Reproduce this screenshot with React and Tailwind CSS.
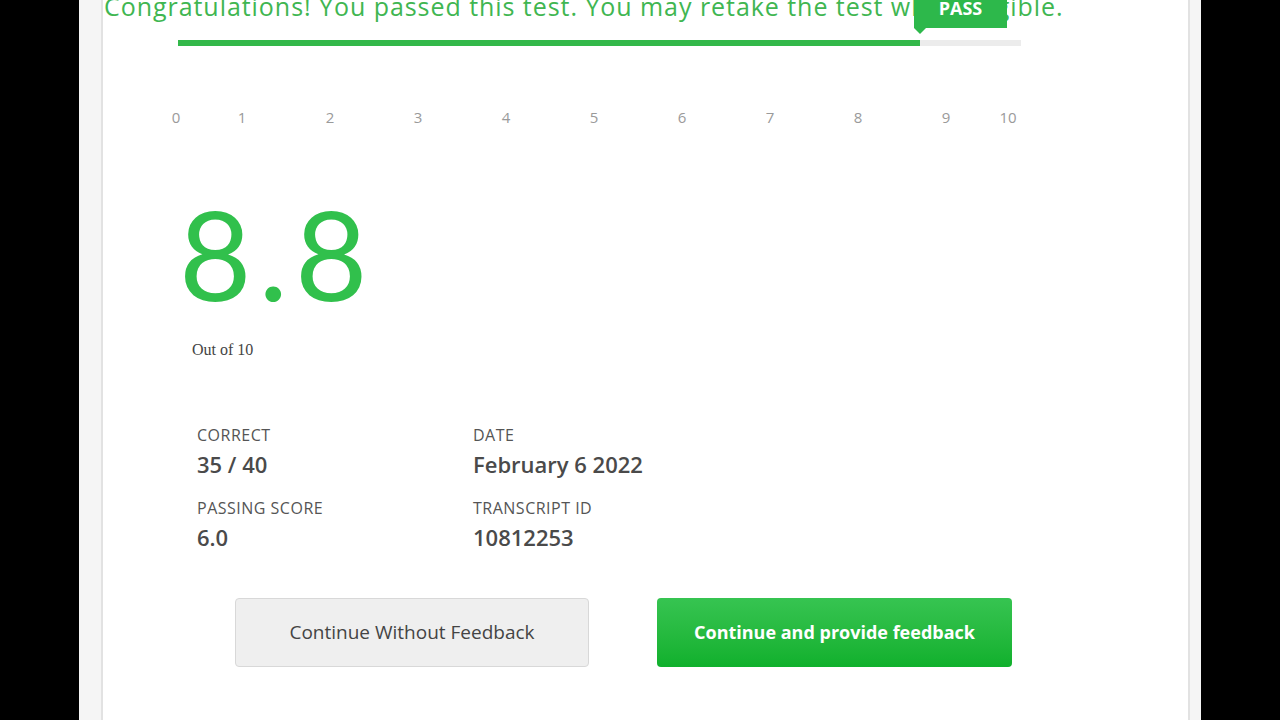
export default function App() {
  const ticks = [1, 2, 3, 4, 5, 6, 7, 8, 9];
  const stats = [
    ["CORRECT", "35 / 40"],
    ["DATE", "February 6 2022"],
    ["PASSING SCORE", "6.0"],
    ["TRANSCRIPT ID", "10812253"],
  ];
  return (
    <div className="w-full h-[720px] bg-black flex overflow-hidden" style={{ fontFamily: '"Open Sans", "Liberation Sans", sans-serif' }}>
      <div className="ml-[79px] w-[1122px] h-full bg-[#f5f5f5] flex pl-[22px] pr-[11px]">
        <div className="flex-1 h-full bg-white border-l-2 border-r-2 border-[#e2e2e2] relative">
          <div className="mt-[-9px] pl-[1px] text-[25px] leading-[30px] text-[#40b651] whitespace-nowrap tracking-[0.95px]">
            Congratulations! You passed this test. You may retake the test when eligible.
          </div>
          <div className="relative ml-[75px] mt-[19px] w-[843px] h-[6px] bg-[#ececec] flex">
            <div className="w-[742px] h-full bg-[#33b84a]"></div>
            <div className="absolute left-[736px] top-[-52px] w-[93px] h-[40px] bg-[#2db84b] flex items-end justify-center pb-[11px] text-white font-bold text-[18px] leading-none">
              PASS
              <div className="absolute left-0 bottom-[-6px] w-0 h-0 border-l-[6px] border-r-[6px] border-t-[6px] border-l-transparent border-r-transparent border-t-[#2db84b]"></div>
            </div>
          </div>
          <div className="flex ml-[51px] mt-[61px] text-[15px] leading-[20px] text-[#9a9a9a]">
            <div className="w-[44px] text-center">0</div>
            {ticks.map((t) => (
              <div key={t} className="w-[88px] text-center">{t}</div>
            ))}
            <div className="w-[36px] text-center">10</div>
          </div>
          <div className="ml-[76px] mt-[61px] text-[125px] leading-[130px] text-[#31c04c] tracking-[7px]" style={{ fontFamily: '"Lato", "Open Sans", sans-serif' }}>
            8.8
          </div>
          <div className="ml-[89px] mt-[20px] text-[16px] leading-[24px] text-[#444]" style={{ fontFamily: '"Liberation Serif", serif' }}>
            Out of 10
          </div>
          <div className="ml-[94px] mt-[63px] grid grid-cols-[276px_300px] gap-y-[19px] text-[#4a4a4a]">
            {stats.map(([label, value]) => (
              <div key={label}>
                <div className="text-[16px] leading-[20px] text-[#555] tracking-[0.5px]">{label}</div>
                <div className="mt-[4px] text-[22px] leading-[30px] font-semibold">{value}</div>
              </div>
            ))}
          </div>
          <div className="flex ml-[132px] mt-[46px] gap-[68px]">
            <div className="w-[354px] h-[69px] bg-[#efefef] border border-[#d8d8d8] rounded-[4px] flex items-center justify-center text-[19px] text-[#444]">
              Continue Without Feedback
            </div>
            <div className="w-[355px] h-[69px] rounded-[4px] bg-gradient-to-b from-[#36c451] to-[#0fb02c] flex items-center justify-center text-[18px] font-bold text-white">
              Continue and provide feedback
            </div>
          </div>
        </div>
      </div>
    </div>
  );
}
